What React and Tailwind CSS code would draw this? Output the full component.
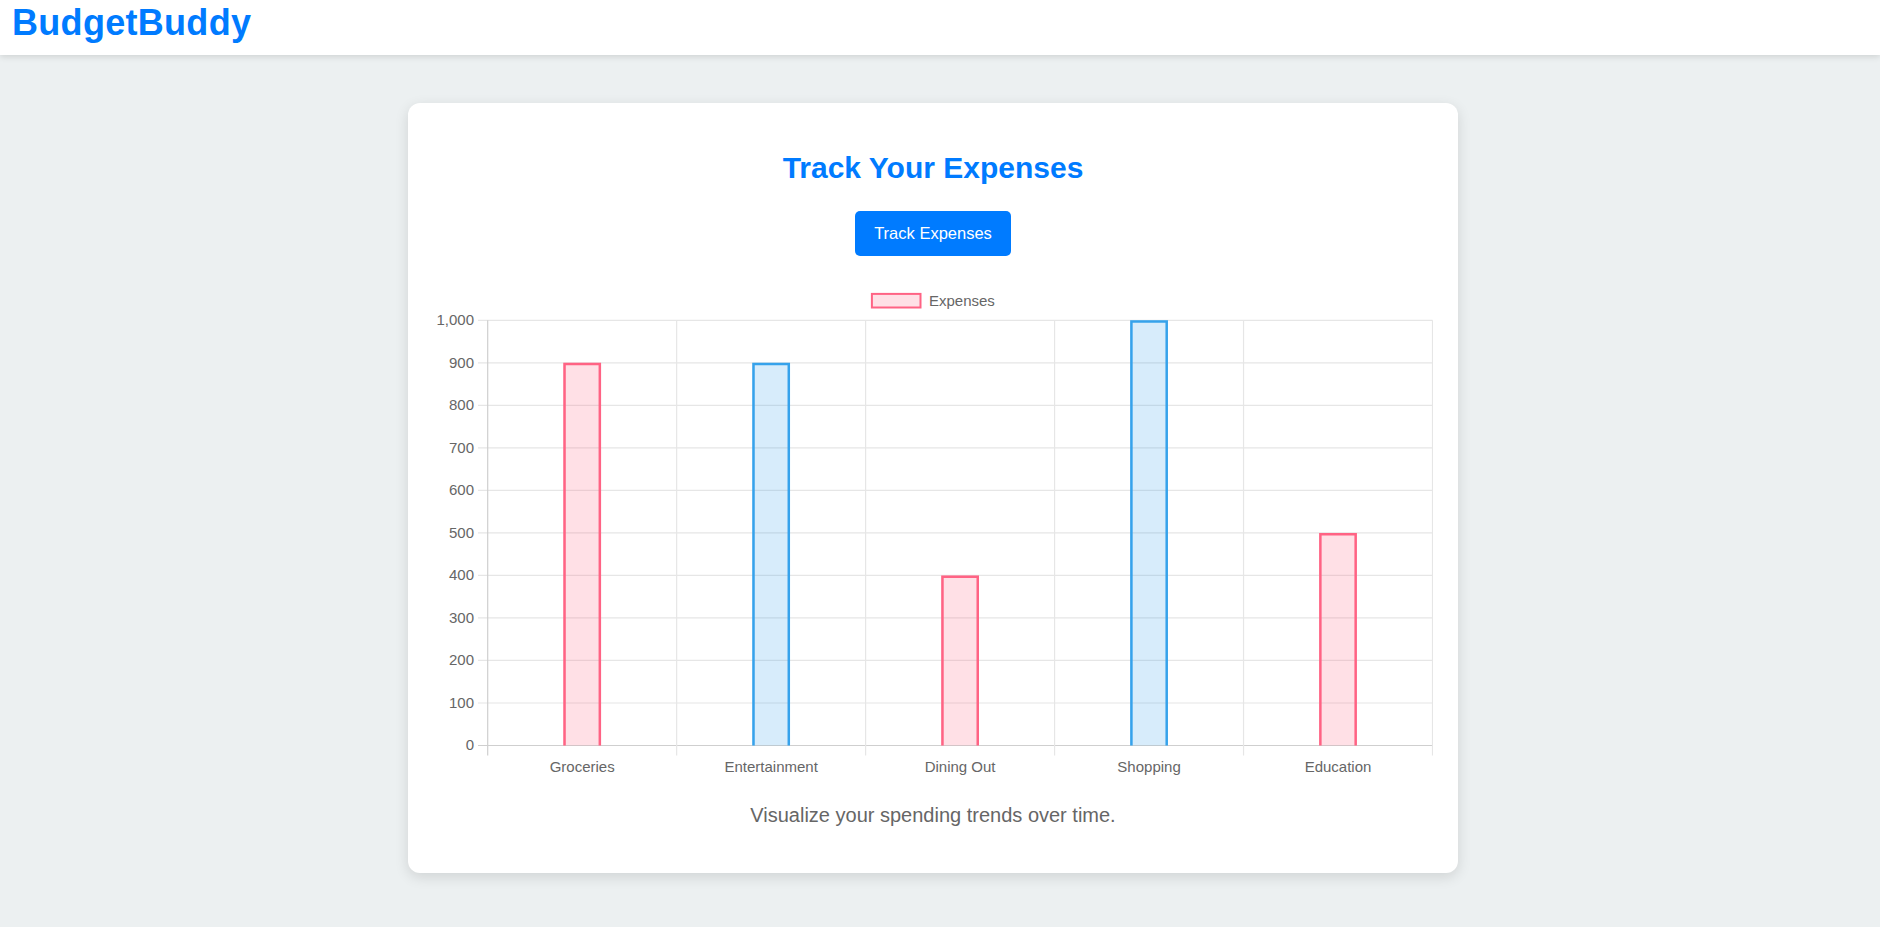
import React from 'react'

const FONT = "'Liberation Sans', Arial, Helvetica, sans-serif"

const DATA = [
  { label: 'Groceries', value: 900, kind: 'pink' },
  { label: 'Entertainment', value: 900, kind: 'blue' },
  { label: 'Dining Out', value: 400, kind: 'pink' },
  { label: 'Shopping', value: 1000, kind: 'blue' },
  { label: 'Education', value: 500, kind: 'pink' },
]

const COLORS = {
  pink: { fill: 'rgba(255,99,132,0.2)', stroke: 'rgb(255,99,132)' },
  blue: { fill: 'rgba(54,162,235,0.2)', stroke: 'rgb(54,162,235)' },
}

// plot box inside the 1000x500 chart
const LEFT = 54.7
const RIGHT = 999.5
const TOP = 40.3
const BOTTOM = 465.5
const CAT = (RIGHT - LEFT) / 5
const STEP = (BOTTOM - TOP) / 10
const BAR = CAT * 0.2
const BW = 2.5

function ExpenseChart() {
  const ticks = Array.from({ length: 11 }, (_, i) => i * 100)
  const y = (v) => BOTTOM - (v / 100) * STEP

  return (
    <svg width="1000" height="500" viewBox="0 0 1000 500" style={{ fontFamily: FONT }}>
      {/* legend */}
      <rect x="438.9" y="13.9" width="48.6" height="13.6" fill={COLORS.pink.fill} stroke={COLORS.pink.stroke} strokeWidth="2" />
      <text x="496" y="22" fontSize="15" fill="#666" dominantBaseline="middle">Expenses</text>

      {/* horizontal grid + y ticks */}
      {ticks.map((t) => (
        <g key={t}>
          <line x1="45" x2={RIGHT} y1={y(t)} y2={y(t)} stroke={t === 0 ? '#cfcfcf' : '#e6e6e6'} strokeWidth="1.2" />
          <text x="41" y={y(t) + 1} fontSize="15" fill="#666" textAnchor="end" dominantBaseline="middle">
            {t.toLocaleString('en-US')}
          </text>
        </g>
      ))}

      {/* vertical grid + x ticks */}
      {Array.from({ length: 6 }, (_, i) => {
        const x = LEFT + i * CAT
        return (
          <line key={i} x1={x} x2={x} y1={TOP} y2={BOTTOM + 10} stroke={i === 0 ? '#cfcfcf' : '#e6e6e6'} strokeWidth="1.2" />
        )
      })}

      {/* bars */}
      {DATA.map((d, i) => {
        const cx = LEFT + CAT * (i + 0.5)
        const x0 = cx - BAR / 2
        const x1 = cx + BAR / 2
        const top = y(d.value)
        const c = COLORS[d.kind]
        const h = BW / 2
        return (
          <g key={d.label}>
            <rect x={x0} y={top} width={BAR} height={BOTTOM - top} fill={c.fill} />
            <path
              d={`M${x0 + h} ${BOTTOM} L${x0 + h} ${top + h} L${x1 - h} ${top + h} L${x1 - h} ${BOTTOM}`}
              fill="none"
              stroke={c.stroke}
              strokeWidth={BW}
            />
            <text x={cx} y="488" fontSize="15" fill="#666" textAnchor="middle" dominantBaseline="middle">
              {d.label}
            </text>
          </g>
        )
      })}
    </svg>
  )
}

export default function App() {
  return (
    <div className="min-h-[927px] bg-[#ecf0f1]" style={{ fontFamily: FONT }}>
      {/* Header */}
      <header className="h-[55px] bg-white px-3 pt-[2px] shadow-[0_2px_6px_rgba(0,0,0,0.12)] relative z-10">
        <h1 className="text-[36px] leading-[41px] font-bold tracking-[0.3px] text-[#007bff]">BudgetBuddy</h1>
      </header>

      {/* Main */}
      <main className="flex justify-center pt-[48px] pr-[14px] pb-[54px]">
        <section className="w-[1050px] bg-white rounded-[12px] shadow-[0_4px_14px_rgba(0,0,0,0.12)] px-[25px] pt-[48px] pb-[46px] flex flex-col items-center">
          <h2 className="text-[30px] leading-[34px] font-bold text-[#007bff]">Track Your Expenses</h2>
          <button className="mt-[26px] h-[45px] px-[19px] rounded-[5px] bg-[#007bff] text-white text-[16.5px]">
            Track Expenses
          </button>
          <div className="mt-[24px]">
            <ExpenseChart />
          </div>
          <p className="mt-[24px] text-[20px] leading-[23px] text-[#666]">Visualize your spending trends over time.</p>
        </section>
      </main>
    </div>
  )
}
